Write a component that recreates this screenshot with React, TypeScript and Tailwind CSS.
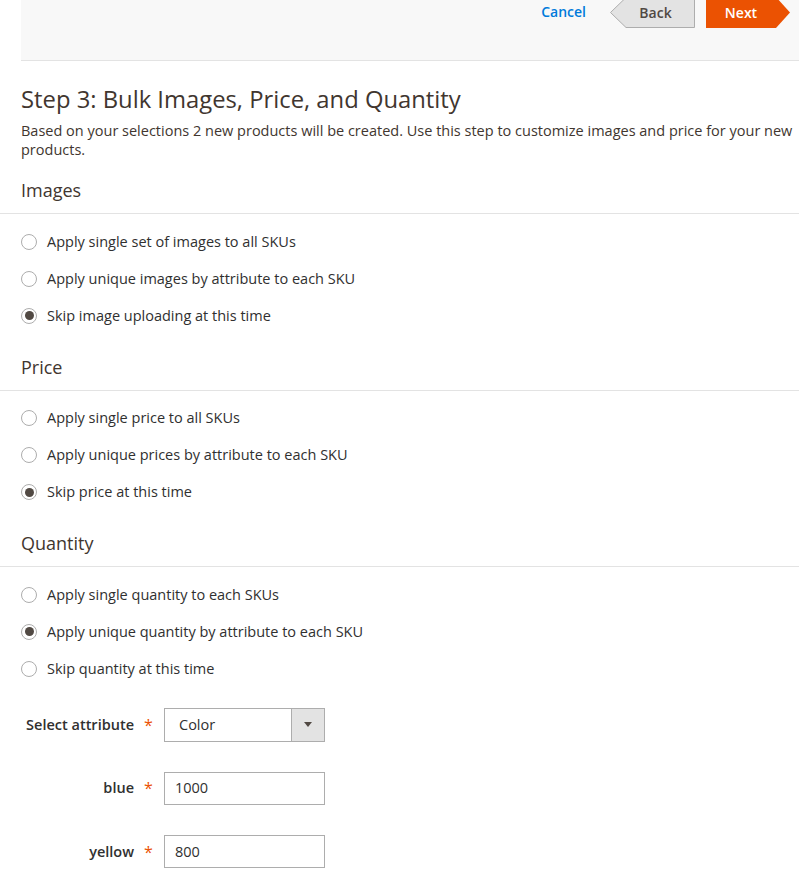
import React from 'react';

const Radio = ({ checked, label }: { checked?: boolean; label: string }) => (
  <label className="flex items-center h-[37px]">
    <span className="w-[16px] h-[16px] ml-[21px] rounded-full border border-[#adadad] bg-white flex items-center justify-center">
      {checked && <span className="w-[9px] h-[9px] rounded-full bg-[#514943]" />}
    </span>
    <span className="ml-[10px] text-[14.5px] leading-[20px] text-[#303030]">{label}</span>
  </label>
);

const Section = ({ title, options, selected, first }: { title: string; options: string[]; selected: number; first?: boolean }) => (
  <div className={first ? 'mt-[19px]' : 'mt-[20.5px]'}>
    <h3 className="pl-[21px] text-[18px] leading-[24px] text-[#41362f] pb-[11px] border-b border-[#e3e3e3]">{title}</h3>
    <div className="mt-[9px]">
      {options.map((o, i) => (
        <Radio key={o} label={o} checked={i === selected} />
      ))}
    </div>
  </div>
);

const Field = ({ label, children }: { label: string; children: React.ReactNode }) => (
  <div className="flex items-center h-[34px]">
    <div className="w-[134px] text-right text-[14.5px] leading-[20px] font-semibold text-[#303030]">{label}</div>
    <div className="w-[30px] pl-[10px] text-[#eb5202] text-[16px] leading-none">*</div>
    {children}
  </div>
);

export default function App() {
  return (
    <div className="w-[799px] bg-white font-['Open_Sans',sans-serif] text-[#303030]">
      <div className="ml-[21px] h-[61px] bg-[#f8f8f8] border-b border-[#e3e3e3] flex items-start justify-end overflow-hidden">
        <a className="mt-[1px] text-[14px] font-semibold text-[#007bdb]">Cancel</a>
        <div className="ml-[24px] mt-[-3px] relative h-[31px] w-[85px]">
          <svg className="absolute inset-0" width="85" height="31" viewBox="0 0 85 31">
            <polygon points="0.5,15.5 16,0.5 84.5,0.5 84.5,30.5 16,30.5" fill="#e3e3e3" stroke="#adadad" />
          </svg>
          <span className="absolute inset-0 flex items-center justify-center pl-[6px] text-[14px] font-semibold text-[#514943]">Back</span>
        </div>
        <div className="ml-[11px] mr-[9px] mt-[-3px] relative h-[31px] w-[84px]">
          <svg className="absolute inset-0" width="84" height="31" viewBox="0 0 84 31">
            <polygon points="0,0 70,0 84,15.5 70,31 0,31" fill="#eb5202" />
          </svg>
          <span className="absolute inset-0 flex items-center justify-center pr-[14px] text-[14px] font-semibold text-white">Next</span>
        </div>
      </div>

      <h2 className="pl-[21px] mt-[22px] text-[23.8px] leading-[32px] text-[#41362f]">Step 3: Bulk Images, Price, and Quantity</h2>
      <p className="pl-[21px] mt-[6px] text-[14.5px] leading-[19px] text-[#41362f]">
        Based on your selections 2 new products will be created. Use this step to customize images and price for your new products.
      </p>

      <Section
        first
        title="Images"
        selected={2}
        options={['Apply single set of images to all SKUs', 'Apply unique images by attribute to each SKU', 'Skip image uploading at this time']}
      />
      <Section
        title="Price"
        selected={2}
        options={['Apply single price to all SKUs', 'Apply unique prices by attribute to each SKU', 'Skip price at this time']}
      />
      <Section
        title="Quantity"
        selected={1}
        options={['Apply single quantity to each SKUs', 'Apply unique quantity by attribute to each SKU', 'Skip quantity at this time']}
      />

      <div className="mt-[20.5px] flex flex-col gap-[29.5px] pb-[8px]">
        <Field label="Select attribute">
          <div className="flex w-[161px] h-[34px] border border-[#adadad] bg-white">
            <div className="flex-1 flex items-center pl-[14px] text-[14.5px] text-[#303030]">Color</div>
            <div className="w-[33px] bg-[#e3e3e3] border-l border-[#adadad] flex items-center justify-center">
              <svg width="8" height="5" viewBox="0 0 8 5"><polygon points="0,0 8,0 4,5" fill="#514943" /></svg>
            </div>
          </div>
        </Field>
        <Field label="blue">
          <div className="w-[161px] h-[33px] border border-[#adadad] bg-white flex items-center pl-[10px] text-[14.5px] text-[#303030]">1000</div>
        </Field>
        <Field label="yellow">
          <div className="w-[161px] h-[33px] border border-[#adadad] bg-white flex items-center pl-[10px] text-[14.5px] text-[#303030]">800</div>
        </Field>
      </div>
    </div>
  );
}
